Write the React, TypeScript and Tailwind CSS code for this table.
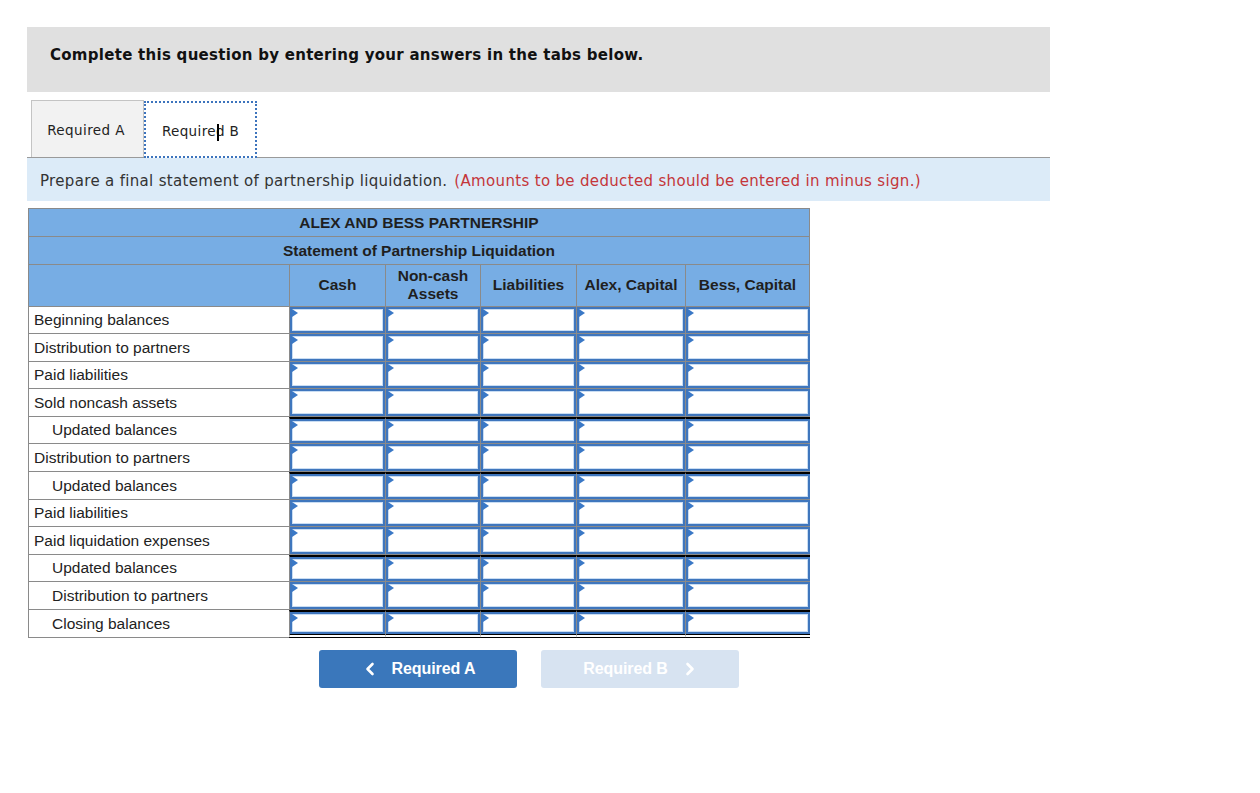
import React from "react";

const rows: { label: string; indent?: boolean; h: number; total?: boolean; last?: boolean }[] = [
  { label: "Beginning balances", h: 27 },
  { label: "Distribution to partners", h: 28 },
  { label: "Paid liabilities", h: 27 },
  { label: "Sold noncash assets", h: 28 },
  { label: "Updated balances", indent: true, h: 27, total: true },
  { label: "Distribution to partners", h: 28 },
  { label: "Updated balances", indent: true, h: 28, total: true },
  { label: "Paid liabilities", h: 27 },
  { label: "Paid liquidation expenses", h: 28 },
  { label: "Updated balances", indent: true, h: 27, total: true },
  { label: "Distribution to partners", indent: true, h: 28 },
  { label: "Closing balances", indent: true, h: 28, total: true, last: true },
];

const colW = ["w-[96px]", "w-[95px]", "w-[96px]", "w-[109px]", "w-[125px]"];

function InputCell({ w, total, last }: { w: string; total?: boolean; last?: boolean }) {
  return (
    <div
      className={`${w} shrink-0 h-full flex flex-col border-l border-[#8a8a8a] ${
        total ? "border-t-2 border-t-black" : ""
      } ${last ? "border-b-black" : "border-b border-b-[#8a8a8a]"}`}
      style={last ? { borderBottomStyle: "double", borderBottomWidth: 4 } : undefined}
    >
      <div className="relative flex-1 border-2 border-[#3f76bd] bg-white">
        <div className="absolute inset-0 border border-[#c9ddf3]" />
        <div className="absolute left-0 top-0 w-0 h-0 border-t-[4px] border-b-[4px] border-l-[6px] border-t-transparent border-b-transparent border-l-[#3a78c6]" />
      </div>
    </div>
  );
}

export default function App() {
  return (
    <div className="bg-white min-h-[793px] w-[1260px] pt-[27px] pl-[27px]" style={{ fontFamily: "'DejaVu Sans', Verdana, sans-serif" }}>
      <div className="w-[1023px]">
        {/* Header */}
        <div className="h-[65px] bg-[#e0e0e0] flex items-start pt-[17px] pl-[23px]">
          <span className="text-[15px] leading-[22px] font-bold text-[#111] tracking-[0.28px]">
            Complete this question by entering your answers in the tabs below.
          </span>
        </div>

        {/* Tabs */}
        <div className="mt-[8px] flex items-end border-b border-[#9a9a9a] pl-[4px] h-[58px]">
          <div className="w-[113px] h-[57px] bg-[#f2f2f2] border border-[#c4c4c4] border-b-0 flex items-center justify-center pt-[3px] pr-[3px] text-[13.5px] tracking-[0.4px] text-[#222]">
            Required A
          </div>
          <div className="relative w-[113px] h-[57px] bg-white border-2 border-dotted border-[#3d74bd] flex items-center justify-center pt-[3px] text-[13.5px] tracking-[0.35px] text-[#222] -mb-px">
            Required B
            <div className="absolute left-[71px] top-[21px] w-[2px] h-[17px] bg-black" />
          </div>
        </div>

        {/* Instruction */}
        <div className="h-[43px] bg-[#dcebf8] flex items-center pl-[13px] pt-[3px] text-[15px] tracking-[0.33px] text-[#333]">
          <span>Prepare a final statement of partnership liquidation.</span>
          <span className="ml-[7px] text-[#c4363a]">(Amounts to be deducted should be entered in minus sign.)</span>
        </div>
      </div>

      {/* Table */}
      <div className="mt-[7px] ml-[1px] w-[782px]" style={{ fontFamily: "'Liberation Sans', Arial, sans-serif" }}>
        <div className="border border-[#8a8a8a] bg-[#77ade4] text-[#1f1f1f] font-bold text-[15.5px]">
          <div className="h-[28px] flex items-center justify-center border-b border-[#8a8a8a]">ALEX AND BESS PARTNERSHIP</div>
          <div className="h-[28px] flex items-center justify-center border-b border-[#8a8a8a]">Statement of Partnership Liquidation</div>
          <div className="h-[41px] flex">
            <div className="w-[260px] shrink-0" />
            {["Cash", "Non-cash\nAssets", "Liabilities", "Alex, Capital", "Bess, Capital"].map((t, i) => (
              <div
                key={i}
                className={`${i === 4 ? "flex-1" : colW[i]} shrink-0 border-l border-[#8a8a8a] flex items-center justify-center text-center leading-[18px] whitespace-pre-line pb-[2px]`}
              >
                {t}
              </div>
            ))}
          </div>
        </div>
        <div className="border-l border-[#8a8a8a]">
          {rows.map((r, idx) => (
            <div key={idx} className="flex" style={{ height: r.h }}>
              <div
                className={`w-[260px] shrink-0 border-b border-[#8a8a8a] flex items-center text-[15.5px] text-[#222] ${
                  r.indent ? "pl-[23px]" : "pl-[5px]"
                }`}
              >
                {r.label}
              </div>
              {colW.map((w, i) => (
                <InputCell key={i} w={w} total={r.total} last={r.last} />
              ))}
            </div>
          ))}
        </div>
      </div>

      {/* Buttons */}
      <div className="mt-[12px] ml-[292px] flex gap-[24px]" style={{ fontFamily: "'Liberation Sans', Arial, sans-serif" }}>
        <button className="w-[198px] h-[38px] rounded-[3px] bg-[#3a77bb] text-white font-bold text-[16px] flex items-center justify-center gap-[17px] pl-[4px]">
          <svg width="10" height="14" viewBox="0 0 10 14" fill="none">
            <path d="M7.5 2 L2.5 7 L7.5 12" stroke="white" strokeWidth="2.6" strokeLinecap="round" strokeLinejoin="round" />
          </svg>
          <span className="tracking-[-0.1px]">Required A</span>
        </button>
        <button className="w-[198px] h-[38px] rounded-[3px] bg-[#d7e3f1] text-white font-bold text-[16px] flex items-center justify-center gap-[17px] pr-[2px]">
          <span className="tracking-[-0.1px]">Required B</span>
          <svg width="10" height="14" viewBox="0 0 10 14" fill="none">
            <path d="M2.5 2 L7.5 7 L2.5 12" stroke="white" strokeWidth="2.6" strokeLinecap="round" strokeLinejoin="round" />
          </svg>
        </button>
      </div>
    </div>
  );
}
